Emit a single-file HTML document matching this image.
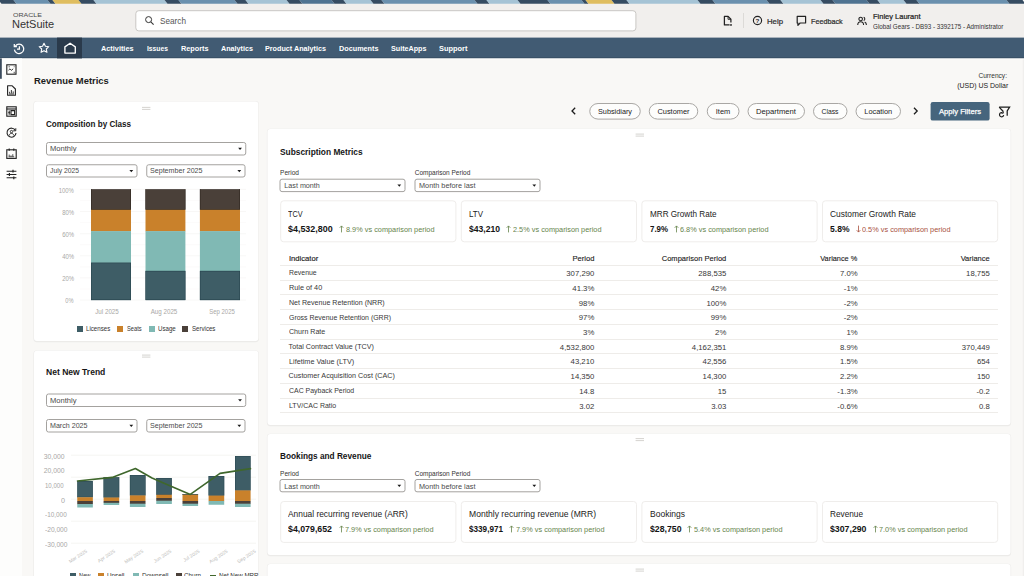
<!DOCTYPE html>
<html lang="en">
<head>
<meta charset="utf-8">
<title>Revenue Metrics</title>
<style>
*{box-sizing:border-box;margin:0;padding:0}
html,body{width:1024px;height:576px;overflow:hidden}
body{position:relative;background:#f9f8f6;font-family:"Liberation Sans",sans-serif;color:#222;font-size:7.5px}
.a{position:absolute}
.t{position:absolute;white-space:nowrap;line-height:1}
svg{display:block;overflow:visible}
</style>
</head>
<body>
<div class="a" style="left:0;top:3px;width:1024px;height:35px;background:#f1efed"></div>
<svg class="a" style="left:0;top:0" width="1024" height="576" viewBox="0 0 1024 576"><rect x="135.80" y="10.70" width="500.10" height="20.20" rx="3" fill="#fff" stroke="#c9c7c4" stroke-width="1"/><rect x="0" y="37.6" width="1024" height="20.8" fill="#415b73"/><rect x="0" y="57.3" width="1024" height="1.1" fill="#374d63"/><rect x="0" y="58.4" width="1024" height="1" fill="#fdfdfd"/><rect x="57" y="37.6" width="25" height="20.8" fill="#2a3a4b"/><rect x="0" y="58.4" width="22" height="518" fill="#fdfdfc"/><rect x="0" y="58.4" width="1.8" height="20.4" fill="#3b4b5d"/><rect x="1022.7" y="59.4" width="1.3" height="517" fill="#f0efed"/><rect x="589.75" y="103.50" width="50.50" height="15.60" rx="8.3" fill="#fdfdfc" stroke="#a9a7a4" stroke-width="1"/><rect x="649.25" y="103.50" width="48.50" height="15.60" rx="8.3" fill="#fdfdfc" stroke="#a9a7a4" stroke-width="1"/><rect x="707.25" y="103.50" width="31.75" height="15.60" rx="8.3" fill="#fdfdfc" stroke="#a9a7a4" stroke-width="1"/><rect x="748.00" y="103.50" width="56.50" height="15.60" rx="8.3" fill="#fdfdfc" stroke="#a9a7a4" stroke-width="1"/><rect x="813.50" y="103.50" width="33.50" height="15.60" rx="8.3" fill="#fdfdfc" stroke="#a9a7a4" stroke-width="1"/><rect x="856.00" y="103.50" width="44.50" height="15.60" rx="8.3" fill="#fdfdfc" stroke="#a9a7a4" stroke-width="1"/><rect x="930.6" y="102" width="59" height="18.6" rx="2.2" fill="#46657d"/><rect x="33.40" y="101.10" width="225.50" height="241.10" rx="3.4" fill="#ecebe9"/><rect x="34.00" y="101.40" width="224.30" height="239.60" rx="3" fill="#fff"/><path d="M142.00 107.40h8.4M142.00 109.40h8.4" stroke="#d0cecb" stroke-width=".9" fill="none"/><rect x="46.50" y="142.50" width="199.25" height="12.50" rx="2" fill="#fff" stroke="#a4a29f" stroke-width="1"/><path d="M238.15 147.85h3.8l-1.9 2.2z" fill="#1a1a1a"/><rect x="46.50" y="164.75" width="90.50" height="12.25" rx="2" fill="#fff" stroke="#a4a29f" stroke-width="1"/><path d="M129.40 169.97h3.8l-1.9 2.2z" fill="#1a1a1a"/><rect x="146.75" y="164.75" width="98.25" height="12.25" rx="2" fill="#fff" stroke="#a4a29f" stroke-width="1"/><path d="M237.40 169.97h3.8l-1.9 2.2z" fill="#1a1a1a"/><rect x="33.40" y="350.50" width="225.50" height="241.50" rx="3.4" fill="#ecebe9"/><rect x="34.00" y="350.80" width="224.30" height="240.00" rx="3" fill="#fff"/><path d="M142.00 355.10h8.4M142.00 357.10h8.4" stroke="#d0cecb" stroke-width=".9" fill="none"/><rect x="46.50" y="394.00" width="199.25" height="12.50" rx="2" fill="#fff" stroke="#a4a29f" stroke-width="1"/><path d="M238.15 399.35h3.8l-1.9 2.2z" fill="#1a1a1a"/><rect x="46.50" y="419.50" width="90.50" height="12.50" rx="2" fill="#fff" stroke="#a4a29f" stroke-width="1"/><path d="M129.40 424.85h3.8l-1.9 2.2z" fill="#1a1a1a"/><rect x="146.75" y="419.50" width="98.25" height="12.50" rx="2" fill="#fff" stroke="#a4a29f" stroke-width="1"/><path d="M237.40 424.85h3.8l-1.9 2.2z" fill="#1a1a1a"/><rect x="266.90" y="128.80" width="744.20" height="297.40" rx="3.4" fill="#ecebe9"/><rect x="267.50" y="129.10" width="743.00" height="295.90" rx="3" fill="#fff"/><path d="M635.60 134.10h8.4M635.60 136.10h8.4" stroke="#d0cecb" stroke-width=".9" fill="none"/><rect x="280.00" y="179.20" width="125.00" height="12.40" rx="2" fill="#fff" stroke="#a4a29f" stroke-width="1"/><path d="M397.40 184.50h3.8l-1.9 2.2z" fill="#1a1a1a"/><rect x="415.00" y="179.20" width="125.00" height="12.40" rx="2" fill="#fff" stroke="#a4a29f" stroke-width="1"/><path d="M532.40 184.50h3.8l-1.9 2.2z" fill="#1a1a1a"/><rect x="280.70" y="200.80" width="175.20" height="41.00" rx="3" fill="#fff" stroke="#efedeb" stroke-width="1"/><rect x="461.30" y="200.80" width="175.20" height="41.00" rx="3" fill="#fff" stroke="#efedeb" stroke-width="1"/><rect x="641.90" y="200.80" width="175.20" height="41.00" rx="3" fill="#fff" stroke="#efedeb" stroke-width="1"/><rect x="822.50" y="200.80" width="175.20" height="41.00" rx="3" fill="#fff" stroke="#efedeb" stroke-width="1"/><rect x="266.90" y="433.70" width="744.20" height="122.50" rx="3.4" fill="#ecebe9"/><rect x="267.50" y="434.00" width="743.00" height="121.00" rx="3" fill="#fff"/><path d="M635.60 438.60h8.4M635.60 440.60h8.4" stroke="#d0cecb" stroke-width=".9" fill="none"/><rect x="280.00" y="479.50" width="125.00" height="12.30" rx="2" fill="#fff" stroke="#a4a29f" stroke-width="1"/><path d="M397.40 484.75h3.8l-1.9 2.2z" fill="#1a1a1a"/><rect x="415.00" y="479.50" width="125.00" height="12.30" rx="2" fill="#fff" stroke="#a4a29f" stroke-width="1"/><path d="M532.40 484.75h3.8l-1.9 2.2z" fill="#1a1a1a"/><rect x="280.70" y="501.50" width="175.20" height="40.90" rx="3" fill="#fff" stroke="#efedeb" stroke-width="1"/><rect x="461.30" y="501.50" width="175.20" height="40.90" rx="3" fill="#fff" stroke="#efedeb" stroke-width="1"/><rect x="641.90" y="501.50" width="175.20" height="40.90" rx="3" fill="#fff" stroke="#efedeb" stroke-width="1"/><rect x="822.50" y="501.50" width="175.20" height="40.90" rx="3" fill="#fff" stroke="#efedeb" stroke-width="1"/><rect x="266.90" y="563.70" width="744.20" height="41.50" rx="3.4" fill="#ecebe9"/><rect x="267.50" y="564.00" width="743.00" height="40.00" rx="3" fill="#fff"/><path d="M635.60 569.10h8.4M635.60 571.10h8.4" stroke="#d0cecb" stroke-width=".9" fill="none"/></svg>
<svg class="a" style="left:0;top:0" width="1024" height="3.8" viewBox="0 0 1024 4" preserveAspectRatio="none"><polygon points="-1.5,0 13.5,0 16.5,4 1.5,4" fill="#364c62"/><polygon points="13.5,0 47.5,0 50.5,4 16.5,4" fill="#6a90ae"/><polygon points="47.5,0 52.5,0 55.5,4 50.5,4" fill="#364c62"/><polygon points="52.5,0 78.5,0 81.5,4 55.5,4" fill="#dfbd5f"/><polygon points="78.5,0 93.5,0 96.5,4 81.5,4" fill="#364c62"/><polygon points="93.5,0 164.5,0 167.5,4 96.5,4" fill="#a5c3d5"/><polygon points="164.5,0 178.5,0 181.5,4 167.5,4" fill="#364c62"/><polygon points="178.5,0 234.5,0 237.5,4 181.5,4" fill="#6a90ae"/><polygon points="234.5,0 245.5,0 248.5,4 237.5,4" fill="#364c62"/><polygon points="245.5,0 286.5,0 289.5,4 248.5,4" fill="#a5c3d5"/><polygon points="286.5,0 299.5,0 302.5,4 289.5,4" fill="#364c62"/><polygon points="299.5,0 331.5,0 334.5,4 302.5,4" fill="#4f7391"/><polygon points="331.5,0 343.5,0 346.5,4 334.5,4" fill="#364c62"/><polygon points="343.5,0 370.5,0 373.5,4 346.5,4" fill="#a5c3d5"/><polygon points="370.5,0 381.5,0 384.5,4 373.5,4" fill="#364c62"/><polygon points="381.5,0 474.5,0 477.5,4 384.5,4" fill="#6a90ae"/><polygon points="474.5,0 486.5,0 489.5,4 477.5,4" fill="#364c62"/><polygon points="486.5,0 517.5,0 520.5,4 489.5,4" fill="#a5c3d5"/><polygon points="517.5,0 547.5,0 550.5,4 520.5,4" fill="#364c62"/><polygon points="547.5,0 581.5,0 584.5,4 550.5,4" fill="#6a90ae"/><polygon points="581.5,0 585.5,0 588.5,4 584.5,4" fill="#364c62"/><polygon points="585.5,0 611.5,0 614.5,4 588.5,4" fill="#dfbd5f"/><polygon points="611.5,0 626.5,0 629.5,4 614.5,4" fill="#364c62"/><polygon points="626.5,0 697.5,0 700.5,4 629.5,4" fill="#a5c3d5"/><polygon points="697.5,0 712.5,0 715.5,4 700.5,4" fill="#364c62"/><polygon points="712.5,0 766.5,0 769.5,4 715.5,4" fill="#6a90ae"/><polygon points="766.5,0 780.5,0 783.5,4 769.5,4" fill="#364c62"/><polygon points="780.5,0 820.5,0 823.5,4 783.5,4" fill="#a5c3d5"/><polygon points="820.5,0 832.5,0 835.5,4 823.5,4" fill="#364c62"/><polygon points="832.5,0 866.5,0 869.5,4 835.5,4" fill="#4f7391"/><polygon points="866.5,0 877.5,0 880.5,4 869.5,4" fill="#364c62"/><polygon points="877.5,0 903.5,0 906.5,4 880.5,4" fill="#a5c3d5"/><polygon points="903.5,0 916.5,0 919.5,4 906.5,4" fill="#364c62"/><polygon points="916.5,0 1006.5,0 1009.5,4 919.5,4" fill="#6a90ae"/><polygon points="1006.5,0 1022.5,0 1025.5,4 1009.5,4" fill="#364c62"/></svg>
<svg class="a" style="left:143.5px;top:15px" width="11" height="11" viewBox="0 0 11 11"><circle cx="4.6" cy="4.6" r="3" fill="none" stroke="#333" stroke-width="1"/><path d="M6.8 6.8L9.6 9.6" stroke="#333" stroke-width="1.1"/></svg>
<svg class="a" style="left:723px;top:15.2px" width="12" height="13" viewBox="0 0 12 13"><path d="M6.6 9.9H1.4V1.4h3.7L7.9 4.2V7.6" fill="none" stroke="#222" stroke-width="1.25" stroke-linejoin="round"/><path d="M5 1.4V4.3H7.9" fill="none" stroke="#222" stroke-width=".9"/><circle cx="8" cy="9.9" r=".95" fill="#222"/></svg>
<div class="a" style="left:743px;top:13px;width:1px;height:15px;background:#dcdad7"></div>
<svg class="a" style="left:752px;top:15px" width="11" height="11" viewBox="0 0 11 11"><circle cx="5.5" cy="5.5" r="4.1" fill="none" stroke="#222" stroke-width="1.15"/><text x="5.5" y="7.7" font-size="6.2" font-weight="bold" text-anchor="middle" fill="#222" font-family="Liberation Sans,sans-serif">?</text></svg>
<svg class="a" style="left:796px;top:15px" width="11" height="12" viewBox="0 0 11 12"><path d="M1.2 1.4h8.4v6.6H4.1L1.9 10.3V8H1.2z" fill="none" stroke="#222" stroke-width="1.2" stroke-linejoin="round"/></svg>
<svg class="a" style="left:857.4px;top:15.6px" width="10" height="10" viewBox="0 0 12 12"><circle cx="4.4" cy="3.5" r="2.1" fill="none" stroke="#222" stroke-width="1.3"/><path d="M.9 10.8c0-2.6 1.4-3.9 3.5-3.9s3.5 1.3 3.5 3.9" fill="none" stroke="#222" stroke-width="1.3"/><path d="M8 1.6a2 2 0 0 1 0 3.8M9.2 7.1c1.4.5 2.1 1.7 2.1 3.7" fill="none" stroke="#222" stroke-width="1.3"/></svg>
<svg class="a" style="left:12.5px;top:42.5px" width="12" height="12" viewBox="0 0 12 12"><path d="M2.4 2.9A4.7 4.7 0 1 1 1.4 6.6" fill="none" stroke="#fff" stroke-width="1.25"/><path d="M1.3 1.1v2.6h2.6" fill="none" stroke="#fff" stroke-width="1.25"/><path d="M6.4 3.2v3H4" fill="none" stroke="#fff" stroke-width="1.25"/></svg>
<svg class="a" style="left:38px;top:42px" width="12" height="12" viewBox="0 0 12 12"><path d="M6 1.2l1.45 3.1 3.35.4-2.5 2.3.65 3.3L6 8.7l-2.95 1.6.65-3.3-2.5-2.3 3.35-.4z" fill="none" stroke="#fff" stroke-width="1.1" stroke-linejoin="round"/></svg>
<svg class="a" style="left:63.5px;top:42px" width="12" height="12" viewBox="0 0 12 12"><path d="M.9 4.9L6.1 1.2l5.2 3.7v6.2H.9z" fill="none" stroke="#fff" stroke-width="1.35" stroke-linejoin="round"/></svg>
<svg class="a" style="left:5.5px;top:63.5px" width="11" height="11" viewBox="0 0 11 11" fill="none" stroke="#222" stroke-width="1.12"><rect x=".8" y=".8" width="9.2" height="9.4"/><path d="M2.5 6.2l1.5-1.4 1.4 1.6 1.8-1.6" stroke-width=".9"/><path d="M2.6 2.8h1.2M8.2 2.4v.8M8.2 7.8v1.6" stroke-width=".8"/></svg>
<svg class="a" style="left:5.5px;top:84.5px" width="11" height="11" viewBox="0 0 11 11" fill="none" stroke="#222" stroke-width="1.12"><path d="M1.6.8h4.6L9.4 4v6.2H1.6z" stroke-linejoin="round"/><path d="M3.6 8.4V6.8M5.4 8.4V5M7.2 8.4V6.4M3 9h5" stroke-width=".9"/></svg>
<svg class="a" style="left:5.5px;top:105.5px" width="11" height="11" viewBox="0 0 11 11" fill="none" stroke="#222" stroke-width="1.12"><rect x=".8" y=".8" width="9.4" height="9.4"/><path d="M.8 3h9.4"/><path d="M3.2 4.6v4.2M5 4.6h3.6v4H5z" stroke-width="1.1"/><path d="M2.2 6.6h2" stroke-width=".8"/></svg>
<svg class="a" style="left:5.5px;top:126.5px" width="11" height="11" viewBox="0 0 11 11" fill="none" stroke="#222" stroke-width="1.12"><path d="M9.4 3.4A4.5 4.5 0 1 0 10 6" /><path d="M9.8 1.2v2.6H7.2" stroke-width=".9"/><circle cx="5.5" cy="4.6" r="1.2" stroke-width=".9"/><path d="M3.3 8.4c.2-1.4 1-2 2.2-2s2 .6 2.2 2" stroke-width=".9"/></svg>
<svg class="a" style="left:5.5px;top:147.5px" width="11" height="11" viewBox="0 0 11 11" fill="none" stroke="#222" stroke-width="1.12"><rect x=".8" y="1.8" width="9.4" height="8.6"/><path d="M3.2.4v2.4M7.8.4v2.4" /><path d="M3.2 8.6V6.6M5 8.6V7.4M6.8 8.6V6.2M2.6 8.8h5.6" stroke-width=".8"/></svg>
<svg class="a" style="left:5.5px;top:168.5px" width="11" height="11" viewBox="0 0 11 11" fill="none" stroke="#222" stroke-width="1.12"><path d="M.6 2.2h9.8M.6 5.5h9.8M.6 8.8h9.8"/><path d="M7 .8v2.8M3.4 4.1v2.8M7.8 7.4v2.8" stroke-width="1.2"/></svg>
<svg class="a" style="left:571.4px;top:107.2px" width="5.2" height="8" viewBox="0 0 5.2 8"><path d="M4.2 .7L1 4l3.2 3.3" fill="none" stroke="#1c1c1c" stroke-width="1.3"/></svg>
<svg class="a" style="left:913.4px;top:107.2px" width="5.2" height="8" viewBox="0 0 5.2 8"><path d="M1 .7L4.2 4 1 7.3" fill="none" stroke="#1c1c1c" stroke-width="1.3"/></svg>
<svg class="a" style="left:997px;top:104.5px" width="14" height="14" viewBox="0 0 14 14" fill="none" stroke="#1c1c1c" stroke-width="1.25"><path d="M2.2 2.1h10.4L10.2 5.9v4.9"/><path d="M2.2 2.1L6.2 6.5"/><path d="M6.7 10.1a2.1 2.1 0 1 1-1.2-2.3" stroke-width="1.2"/><path d="M6.3 6.4v1.8H4.5" stroke-width=".95"/></svg>
<svg class="a" style="left:34px;top:180px" width="224" height="160" viewBox="34 180 224 160"><path d="M80 189.4H246" stroke="#f3f2f0" stroke-width=".6"/><path d="M80 211.5H246" stroke="#f3f2f0" stroke-width=".6"/><path d="M80 233.7H246" stroke="#f3f2f0" stroke-width=".6"/><path d="M80 255.8H246" stroke="#f3f2f0" stroke-width=".6"/><path d="M80 277.9H246" stroke="#f3f2f0" stroke-width=".6"/><path d="M80 300.1H246" stroke="#f3f2f0" stroke-width=".6"/><path d="M80 200.5H246" stroke="#f8f7f6" stroke-width=".5"/><path d="M80 222.6H246" stroke="#f8f7f6" stroke-width=".5"/><path d="M80 244.7H246" stroke="#f8f7f6" stroke-width=".5"/><path d="M80 266.9H246" stroke="#f8f7f6" stroke-width=".5"/><path d="M80 289.0H246" stroke="#f8f7f6" stroke-width=".5"/><rect x="91" y="189.4" width="40.0" height="20.6" fill="#4a4039"/><rect x="91.25" y="189.65" width="39.5" height="19.9" fill="none" stroke="#2b231d" stroke-width=".5"/><rect x="91" y="209.8" width="40.0" height="21.5" fill="#c9812b"/><rect x="91" y="231.1" width="40.0" height="31.8" fill="#80b9b4"/><rect x="91" y="262.7" width="40.0" height="37.5" fill="#3e5d66"/><rect x="91.25" y="262.95" width="39.5" height="36.8" fill="none" stroke="#24434b" stroke-width=".5"/><rect x="145.5" y="189.4" width="39.9" height="20.6" fill="#4a4039"/><rect x="145.75" y="189.65" width="39.4" height="19.9" fill="none" stroke="#2b231d" stroke-width=".5"/><rect x="145.5" y="209.8" width="39.9" height="21.5" fill="#c9812b"/><rect x="145.5" y="231.1" width="39.9" height="40.0" fill="#80b9b4"/><rect x="145.5" y="270.9" width="39.9" height="29.3" fill="#3e5d66"/><rect x="145.75" y="271.15" width="39.4" height="28.6" fill="none" stroke="#24434b" stroke-width=".5"/><rect x="199.9" y="189.4" width="40.1" height="20.6" fill="#4a4039"/><rect x="200.15" y="189.65" width="39.6" height="19.9" fill="none" stroke="#2b231d" stroke-width=".5"/><rect x="199.9" y="209.8" width="40.1" height="21.5" fill="#c9812b"/><rect x="199.9" y="231.1" width="40.1" height="40.0" fill="#80b9b4"/><rect x="199.9" y="270.9" width="40.1" height="29.3" fill="#3e5d66"/><rect x="200.15" y="271.15" width="39.6" height="28.6" fill="none" stroke="#24434b" stroke-width=".5"/></svg>
<div class="a" style="left:77px;top:325.8px;width:6px;height:6px;background:#3e5d66"></div>
<div class="a" style="left:117.4px;top:325.8px;width:6px;height:6px;background:#c9812b"></div>
<div class="a" style="left:148.7px;top:325.8px;width:6px;height:6px;background:#80b9b4"></div>
<div class="a" style="left:182.4px;top:325.8px;width:6px;height:6px;background:#4a4039"></div>
<svg class="a" style="left:34px;top:440px" width="224" height="136" viewBox="34 440 224 136"><path d="M71 455.2H256" stroke="#f1f0ee" stroke-width=".7"/><path d="M71 477.2H256" stroke="#f1f0ee" stroke-width=".7"/><path d="M71 499.2H256" stroke="#f1f0ee" stroke-width=".7"/><path d="M71 521.2H256" stroke="#f1f0ee" stroke-width=".7"/><path d="M71 543.2H256" stroke="#f1f0ee" stroke-width=".7"/><rect x="77.25" y="481" width="15.6" height="16.45" fill="#3e5d66"/><rect x="77.45" y="481.2" width="15.2" height="15.85" fill="none" stroke="#24434b" stroke-width=".4"/><rect x="77.25" y="497.25" width="15.6" height="3.95" fill="#c9812b"/><rect x="77.25" y="501" width="15.6" height="3.20" fill="#4a4039"/><rect x="77.25" y="504" width="15.6" height="3.50" fill="#80b9b4"/><rect x="103.6" y="477.2" width="15.6" height="20.50" fill="#3e5d66"/><rect x="103.8" y="477.4" width="15.2" height="19.90" fill="none" stroke="#24434b" stroke-width=".4"/><rect x="103.6" y="497.5" width="15.6" height="3.70" fill="#c9812b"/><rect x="103.6" y="501" width="15.6" height="2.00" fill="#4a4039"/><rect x="103.6" y="502.8" width="15.6" height="2.20" fill="#80b9b4"/><rect x="129.9" y="475" width="15.6" height="20.60" fill="#3e5d66"/><rect x="130.1" y="475.2" width="15.2" height="20.00" fill="none" stroke="#24434b" stroke-width=".4"/><rect x="129.9" y="495.4" width="15.6" height="5.80" fill="#c9812b"/><rect x="129.9" y="501" width="15.6" height="2.95" fill="#4a4039"/><rect x="129.9" y="503.75" width="15.6" height="3.25" fill="#80b9b4"/><rect x="156.25" y="478" width="15.6" height="16.95" fill="#3e5d66"/><rect x="156.45" y="478.2" width="15.2" height="16.35" fill="none" stroke="#24434b" stroke-width=".4"/><rect x="156.25" y="494.75" width="15.6" height="3.45" fill="#c9812b"/><rect x="156.25" y="498" width="15.6" height="2.95" fill="#4a4039"/><rect x="156.25" y="500.75" width="15.6" height="3.25" fill="#80b9b4"/><rect x="182.5" y="494" width="15.6" height="0.95" fill="#3e5d66"/><rect x="182.7" y="494.2" width="15.2" height="0.35" fill="none" stroke="#24434b" stroke-width=".4"/><rect x="182.5" y="494.75" width="15.6" height="6.45" fill="#c9812b"/><rect x="182.5" y="501" width="15.6" height="2.95" fill="#4a4039"/><rect x="182.5" y="503.75" width="15.6" height="2.25" fill="#80b9b4"/><rect x="208.6" y="476" width="15.6" height="19.80" fill="#3e5d66"/><rect x="208.79999999999998" y="476.2" width="15.2" height="19.20" fill="none" stroke="#24434b" stroke-width=".4"/><rect x="208.6" y="495.6" width="15.6" height="5.60" fill="#c9812b"/><rect x="208.6" y="501" width="15.6" height="3.75" fill="#80b9b4"/><rect x="235" y="456" width="15.6" height="34.60" fill="#3e5d66"/><rect x="235.2" y="456.2" width="15.2" height="34.00" fill="none" stroke="#24434b" stroke-width=".4"/><rect x="235" y="490.4" width="15.6" height="10.80" fill="#c9812b"/><rect x="235" y="501" width="15.6" height="2.95" fill="#4a4039"/><rect x="235" y="503.75" width="15.6" height="3.25" fill="#80b9b4"/><polyline points="77.5,481 112.2,477.4 135.4,468.5 152,478 164,483.2 190.3,494.4 220,473.4 250.5,468.6" fill="none" stroke="#3f672c" stroke-width="1.6" stroke-linejoin="round" stroke-linecap="round"/><text x="87.5" y="552" transform="rotate(-33 87.5 552)" text-anchor="end" font-size="4.9" fill="#bcbbb9" font-family="Liberation Sans,sans-serif">Mar 2025</text><text x="115.6" y="552" transform="rotate(-33 115.6 552)" text-anchor="end" font-size="4.9" fill="#bcbbb9" font-family="Liberation Sans,sans-serif">Apr 2025</text><text x="143.7" y="552" transform="rotate(-33 143.7 552)" text-anchor="end" font-size="4.9" fill="#bcbbb9" font-family="Liberation Sans,sans-serif">May 2025</text><text x="171.8" y="552" transform="rotate(-33 171.8 552)" text-anchor="end" font-size="4.9" fill="#bcbbb9" font-family="Liberation Sans,sans-serif">Jun 2025</text><text x="200" y="552" transform="rotate(-33 200 552)" text-anchor="end" font-size="4.9" fill="#bcbbb9" font-family="Liberation Sans,sans-serif">Jul 2025</text><text x="228.1" y="552" transform="rotate(-33 228.1 552)" text-anchor="end" font-size="4.9" fill="#bcbbb9" font-family="Liberation Sans,sans-serif">Aug 2025</text><text x="256.2" y="552" transform="rotate(-33 256.2 552)" text-anchor="end" font-size="4.9" fill="#bcbbb9" font-family="Liberation Sans,sans-serif">Sep 2025</text></svg>
<div class="a" style="left:69.75px;top:573px;width:6px;height:6px;background:#3e5d66"></div>
<div class="a" style="left:98px;top:573px;width:6px;height:6px;background:#c9812b"></div>
<div class="a" style="left:133px;top:573px;width:6px;height:6px;background:#80b9b4"></div>
<div class="a" style="left:175.5px;top:573px;width:6px;height:6px;background:#4a4039"></div>
<div class="a" style="left:209.5px;top:575.4px;width:6.5px;height:1.4px;background:#41682c"></div>
<svg class="a" style="left:339.3px;top:225.1px" width="5" height="8" viewBox="0 0 5 8"><path d="M2.5 7.4V1M.7 2.8L2.5.9l1.8 1.9" fill="none" stroke="#66844b" stroke-width=".8"/></svg>
<svg class="a" style="left:506.3px;top:225.1px" width="5" height="8" viewBox="0 0 5 8"><path d="M2.5 7.4V1M.7 2.8L2.5.9l1.8 1.9" fill="none" stroke="#66844b" stroke-width=".8"/></svg>
<svg class="a" style="left:673.9px;top:225.1px" width="5" height="8" viewBox="0 0 5 8"><path d="M2.5 7.4V1M.7 2.8L2.5.9l1.8 1.9" fill="none" stroke="#66844b" stroke-width=".8"/></svg>
<svg class="a" style="left:855.9999999999999px;top:225.1px" width="5" height="8" viewBox="0 0 5 8"><path d="M2.5 .6v6.4M.7 5.2l1.8 1.9 1.8-1.9" fill="none" stroke="#a8503d" stroke-width=".8"/></svg>
<div class="a" style="left:280px;top:264.90px;width:718px;height:1px;background:#eeece9"></div>
<div class="a" style="left:280px;top:279.64px;width:718px;height:1px;background:#eeece9"></div>
<div class="a" style="left:280px;top:294.38px;width:718px;height:1px;background:#eeece9"></div>
<div class="a" style="left:280px;top:309.12px;width:718px;height:1px;background:#eeece9"></div>
<div class="a" style="left:280px;top:323.86px;width:718px;height:1px;background:#eeece9"></div>
<div class="a" style="left:280px;top:338.60px;width:718px;height:1px;background:#eeece9"></div>
<div class="a" style="left:280px;top:353.34px;width:718px;height:1px;background:#eeece9"></div>
<div class="a" style="left:280px;top:368.08px;width:718px;height:1px;background:#eeece9"></div>
<div class="a" style="left:280px;top:382.82px;width:718px;height:1px;background:#eeece9"></div>
<div class="a" style="left:280px;top:397.56px;width:718px;height:1px;background:#eeece9"></div>
<div class="a" style="left:280px;top:412.30px;width:718px;height:1px;background:#eeece9"></div>
<svg class="a" style="left:338.7px;top:525.4px" width="5" height="8" viewBox="0 0 5 8"><path d="M2.5 7.4V1M.7 2.8L2.5.9l1.8 1.9" fill="none" stroke="#66844b" stroke-width=".8"/></svg>
<svg class="a" style="left:509.3px;top:525.4px" width="5" height="8" viewBox="0 0 5 8"><path d="M2.5 7.4V1M.7 2.8L2.5.9l1.8 1.9" fill="none" stroke="#66844b" stroke-width=".8"/></svg>
<svg class="a" style="left:687.4px;top:525.4px" width="5" height="8" viewBox="0 0 5 8"><path d="M2.5 7.4V1M.7 2.8L2.5.9l1.8 1.9" fill="none" stroke="#66844b" stroke-width=".8"/></svg>
<svg class="a" style="left:872.9999999999999px;top:525.4px" width="5" height="8" viewBox="0 0 5 8"><path d="M2.5 7.4V1M.7 2.8L2.5.9l1.8 1.9" fill="none" stroke="#66844b" stroke-width=".8"/></svg>
<div class="t" style="font-size:4.7px;color:#4a4a4a;top:14.28px;left:12.5px;transform:scaleX(1.494);transform-origin:0 50%;">ORACLE</div>
<div class="t" style="font-size:11.2px;color:#333;top:18.76px;left:12.0px;transform:scaleX(0.983);transform-origin:0 50%;">NetSuite</div>
<div class="t" style="font-size:8.4px;color:#555;top:16.82px;left:160.3px;transform:scaleX(0.979);transform-origin:0 50%;">Search</div>
<div class="t" style="font-size:7.6px;color:#2e2e2e;top:17.98px;left:767px;transform:scaleX(1.024);transform-origin:0 50%;-webkit-text-stroke:0.22px #2e2e2e;">Help</div>
<div class="t" style="font-size:7.6px;color:#2e2e2e;top:17.98px;left:811.4px;transform:scaleX(0.947);transform-origin:0 50%;-webkit-text-stroke:0.22px #2e2e2e;">Feedback</div>
<div class="t" style="font-size:7.6px;color:#222;top:12.78px;left:872.5px;transform:scaleX(0.987);transform-origin:0 50%;-webkit-text-stroke:0.22px #222;">Finley Laurant</div>
<div class="t" style="font-size:6.6px;color:#333;top:23.63px;left:872.5px;transform:scaleX(0.951);transform-origin:0 50%;">Global Gears - DB93 - 3392175 - Administrator</div>
<div class="t" style="font-size:7.6px;color:#fff;top:44.98px;font-weight:bold;left:101px;transform:scaleX(0.963);transform-origin:0 50%;">Activities</div>
<div class="t" style="font-size:7.6px;color:#fff;top:44.98px;font-weight:bold;left:146.5px;transform:scaleX(0.888);transform-origin:0 50%;">Issues</div>
<div class="t" style="font-size:7.6px;color:#fff;top:44.98px;font-weight:bold;left:180.5px;transform:scaleX(0.958);transform-origin:0 50%;">Reports</div>
<div class="t" style="font-size:7.6px;color:#fff;top:44.98px;font-weight:bold;left:220.5px;transform:scaleX(0.948);transform-origin:0 50%;">Analytics</div>
<div class="t" style="font-size:7.6px;color:#fff;top:44.98px;font-weight:bold;left:265px;transform:scaleX(0.949);transform-origin:0 50%;">Product Analytics</div>
<div class="t" style="font-size:7.6px;color:#fff;top:44.98px;font-weight:bold;left:339px;transform:scaleX(0.955);transform-origin:0 50%;">Documents</div>
<div class="t" style="font-size:7.6px;color:#fff;top:44.98px;font-weight:bold;left:391px;transform:scaleX(0.945);transform-origin:0 50%;">SuiteApps</div>
<div class="t" style="font-size:7.6px;color:#fff;top:44.98px;font-weight:bold;left:439px;transform:scaleX(0.979);transform-origin:0 50%;">Support</div>
<div class="t" style="font-size:9.6px;color:#1c1c1c;top:76.28px;font-weight:bold;left:34px;transform:scaleX(0.981);transform-origin:0 50%;">Revenue Metrics</div>
<div class="t" style="font-size:6.6px;color:#333;top:72.63px;right:17.00px;">Currency:</div>
<div class="t" style="font-size:7.4px;color:#222;top:81.87px;right:15.50px;transform:scaleX(0.941);transform-origin:100% 50%;">(USD) US Dollar</div>
<div class="t" style="font-size:7.4px;color:#222;top:107.97px;left:615.00px;transform:translateX(-50%) scaleX(0.985);">Subsidiary</div>
<div class="t" style="font-size:7.4px;color:#222;top:107.97px;left:673.50px;transform:translateX(-50%) ;">Customer</div>
<div class="t" style="font-size:7.4px;color:#222;top:107.97px;left:723.12px;transform:translateX(-50%) scaleX(1.009);">Item</div>
<div class="t" style="font-size:7.4px;color:#222;top:107.97px;left:776.25px;transform:translateX(-50%) scaleX(1.036);">Department</div>
<div class="t" style="font-size:7.4px;color:#222;top:107.97px;left:830.25px;transform:translateX(-50%) scaleX(0.920);">Class</div>
<div class="t" style="font-size:7.4px;color:#222;top:107.97px;left:878.25px;transform:translateX(-50%) ;">Location</div>
<div class="t" style="font-size:7.6px;color:#fff;top:107.88px;left:939px;transform:scaleX(1.005);transform-origin:0 50%;-webkit-text-stroke:0.25px #fff;">Apply Filters</div>
<div class="t" style="font-size:9px;color:#161616;top:119.95px;font-weight:bold;left:46.25px;transform:scaleX(0.899);transform-origin:0 50%;">Composition by Class</div>
<div class="t" style="font-size:7.4px;color:#4a4a4a;top:145.37px;left:50.0px;transform:scaleX(1.024);transform-origin:0 50%;">Monthly</div>
<div class="t" style="font-size:7.4px;color:#4a4a4a;top:167.49px;left:50.0px;transform:scaleX(0.917);transform-origin:0 50%;">July 2025</div>
<div class="t" style="font-size:7.4px;color:#4a4a4a;top:167.49px;left:150.25px;transform:scaleX(0.961);transform-origin:0 50%;">September 2025</div>
<div class="t" style="font-size:6.6px;color:#a9a8a6;top:187.83px;right:950.10px;transform:scaleX(0.901);transform-origin:100% 50%;">100%</div>
<div class="t" style="font-size:6.6px;color:#a9a8a6;top:209.96px;right:950.10px;transform:scaleX(0.909);transform-origin:100% 50%;">80%</div>
<div class="t" style="font-size:6.6px;color:#a9a8a6;top:232.09px;right:950.10px;transform:scaleX(0.909);transform-origin:100% 50%;">60%</div>
<div class="t" style="font-size:6.6px;color:#a9a8a6;top:254.22px;right:950.10px;transform:scaleX(0.909);transform-origin:100% 50%;">40%</div>
<div class="t" style="font-size:6.6px;color:#a9a8a6;top:276.35px;right:950.10px;transform:scaleX(0.909);transform-origin:100% 50%;">20%</div>
<div class="t" style="font-size:6.6px;color:#a9a8a6;top:298.48px;right:950.10px;transform:scaleX(0.860);transform-origin:100% 50%;">0%</div>
<div class="t" style="font-size:6.6px;color:#a9a8a6;top:308.93px;left:106.50px;transform:translateX(-50%) scaleX(0.946);">Jul 2025</div>
<div class="t" style="font-size:6.6px;color:#a9a8a6;top:308.93px;left:164.10px;transform:translateX(-50%) scaleX(0.942);">Aug 2025</div>
<div class="t" style="font-size:6.6px;color:#a9a8a6;top:308.93px;left:221.80px;transform:translateX(-50%) scaleX(0.907);">Sep 2025</div>
<div class="t" style="font-size:6.8px;color:#333;top:325.64px;left:86.1px;transform:scaleX(0.906);transform-origin:0 50%;">Licenses</div>
<div class="t" style="font-size:6.8px;color:#333;top:325.64px;left:126.5px;transform:scaleX(0.845);transform-origin:0 50%;">Seats</div>
<div class="t" style="font-size:6.8px;color:#333;top:325.64px;left:157.79999999999998px;transform:scaleX(0.900);transform-origin:0 50%;">Usage</div>
<div class="t" style="font-size:6.8px;color:#333;top:325.64px;left:191.5px;transform:scaleX(0.898);transform-origin:0 50%;">Services</div>
<div class="t" style="font-size:9px;color:#161616;top:367.95px;font-weight:bold;left:46.25px;transform:scaleX(0.949);transform-origin:0 50%;">Net New Trend</div>
<div class="t" style="font-size:7.4px;color:#4a4a4a;top:396.87px;left:50.0px;transform:scaleX(1.024);transform-origin:0 50%;">Monthly</div>
<div class="t" style="font-size:7.4px;color:#4a4a4a;top:422.37px;left:50.0px;transform:scaleX(0.961);transform-origin:0 50%;">March 2025</div>
<div class="t" style="font-size:7.4px;color:#4a4a4a;top:422.37px;left:150.25px;transform:scaleX(0.961);transform-origin:0 50%;">September 2025</div>
<div class="t" style="font-size:6.8px;color:#a9a8a6;top:453.84px;left:43.75px;">30,000</div>
<div class="t" style="font-size:6.8px;color:#a9a8a6;top:468.49px;left:43.75px;">20,000</div>
<div class="t" style="font-size:6.8px;color:#a9a8a6;top:483.14px;left:44.5px;transform:scaleX(0.890);transform-origin:0 50%;">10,000</div>
<div class="t" style="font-size:6.8px;color:#a9a8a6;top:497.79px;left:61px;transform:scaleX(1.058);transform-origin:0 50%;">0</div>
<div class="t" style="font-size:6.8px;color:#a9a8a6;top:512.44px;left:45px;transform:scaleX(0.941);transform-origin:0 50%;">-10,000</div>
<div class="t" style="font-size:6.8px;color:#a9a8a6;top:527.09px;left:44.5px;transform:scaleX(0.976);transform-origin:0 50%;">-20,000</div>
<div class="t" style="font-size:6.8px;color:#a9a8a6;top:541.74px;left:44.5px;transform:scaleX(0.976);transform-origin:0 50%;">-30,000</div>
<div class="t" style="font-size:6.8px;color:#333;top:572.84px;left:78.65px;transform:scaleX(0.845);transform-origin:0 50%;">New</div>
<div class="t" style="font-size:6.8px;color:#333;top:572.84px;left:106.9px;transform:scaleX(0.926);transform-origin:0 50%;">Upsell</div>
<div class="t" style="font-size:6.8px;color:#333;top:572.84px;left:141.9px;transform:scaleX(0.961);transform-origin:0 50%;">Downsell</div>
<div class="t" style="font-size:6.8px;color:#333;top:572.84px;left:184.4px;transform:scaleX(0.918);transform-origin:0 50%;">Churn</div>
<div class="t" style="font-size:6.8px;color:#333;top:572.84px;left:218.5px;transform:scaleX(0.909);transform-origin:0 50%;">Net New MRR</div>
<div class="t" style="font-size:8.8px;color:#161616;top:147.64px;font-weight:bold;left:279.7px;transform:scaleX(0.950);transform-origin:0 50%;">Subscription Metrics</div>
<div class="t" style="font-size:6.5px;color:#333;top:170.27px;left:279.7px;transform:scaleX(1.011);transform-origin:0 50%;">Period</div>
<div class="t" style="font-size:6.5px;color:#333;top:170.27px;left:414.7px;">Comparison Period</div>
<div class="t" style="font-size:7.2px;color:#4a4a4a;top:182.46px;left:284.3px;">Last month</div>
<div class="t" style="font-size:7.2px;color:#4a4a4a;top:182.46px;left:419.3px;transform:scaleX(1.017);transform-origin:0 50%;">Month before last</div>
<div class="t" style="font-size:8.6px;color:#222;top:210.13px;left:288.4px;transform:scaleX(0.849);transform-origin:0 50%;">TCV</div>
<div class="t" style="font-size:9px;color:#141414;top:224.75px;font-weight:bold;left:288.4px;transform:scaleX(0.990);transform-origin:0 50%;">$4,532,800</div>
<div class="t" style="font-size:7.4px;color:#66844b;top:225.57px;left:345.6px;transform:scaleX(0.993);transform-origin:0 50%;">8.9% vs comparison period</div>
<div class="t" style="font-size:8.6px;color:#222;top:210.13px;left:469.0px;transform:scaleX(0.926);transform-origin:0 50%;">LTV</div>
<div class="t" style="font-size:9px;color:#141414;top:224.75px;font-weight:bold;left:469.0px;transform:scaleX(0.952);transform-origin:0 50%;">$43,210</div>
<div class="t" style="font-size:7.4px;color:#66844b;top:225.57px;left:512.6px;transform:scaleX(0.993);transform-origin:0 50%;">2.5% vs comparison period</div>
<div class="t" style="font-size:8.6px;color:#222;top:210.13px;left:649.6px;transform:scaleX(0.947);transform-origin:0 50%;">MRR Growth Rate</div>
<div class="t" style="font-size:9px;color:#141414;top:224.75px;font-weight:bold;left:649.6px;transform:scaleX(0.877);transform-origin:0 50%;">7.9%</div>
<div class="t" style="font-size:7.4px;color:#66844b;top:225.57px;left:680.1999999999999px;transform:scaleX(0.993);transform-origin:0 50%;">6.8% vs comparison period</div>
<div class="t" style="font-size:8.6px;color:#222;top:210.13px;left:830.1999999999999px;transform:scaleX(0.978);transform-origin:0 50%;">Customer Growth Rate</div>
<div class="t" style="font-size:9px;color:#141414;top:224.75px;font-weight:bold;left:830.1999999999999px;transform:scaleX(0.950);transform-origin:0 50%;">5.8%</div>
<div class="t" style="font-size:7.4px;color:#a8503d;top:225.57px;left:862.2999999999998px;transform:scaleX(0.993);transform-origin:0 50%;">0.5% vs comparison period</div>
<div class="t" style="font-size:7.2px;color:#222;top:254.96px;left:288.6px;transform:scaleX(1.062);transform-origin:0 50%;-webkit-text-stroke:0.15px #222;">Indicator</div>
<div class="t" style="font-size:7.4px;color:#222;top:254.87px;right:429.70px;transform:scaleX(1.029);transform-origin:100% 50%;-webkit-text-stroke:0.12px #222;">Period</div>
<div class="t" style="font-size:7.4px;color:#222;top:254.87px;right:297.70px;transform:scaleX(1.020);transform-origin:100% 50%;-webkit-text-stroke:0.12px #222;">Comparison Period</div>
<div class="t" style="font-size:7.4px;color:#222;top:254.87px;right:166.40px;transform:scaleX(0.993);transform-origin:100% 50%;-webkit-text-stroke:0.12px #222;">Variance %</div>
<div class="t" style="font-size:7.4px;color:#222;top:254.87px;right:34.20px;transform:scaleX(1.013);transform-origin:100% 50%;-webkit-text-stroke:0.12px #222;">Variance</div>
<div class="t" style="font-size:7.2px;color:#383838;top:269.30px;left:288.6px;transform:scaleX(0.962);transform-origin:0 50%;">Revenue</div>
<div class="t" style="font-size:7.75px;color:#383838;top:270.05px;right:429.70px;">307,290</div>
<div class="t" style="font-size:7.75px;color:#383838;top:270.05px;right:297.70px;">288,535</div>
<div class="t" style="font-size:7.75px;color:#383838;top:270.05px;right:166.40px;">7.0%</div>
<div class="t" style="font-size:7.75px;color:#383838;top:270.05px;right:34.20px;">18,755</div>
<div class="t" style="font-size:7.2px;color:#383838;top:284.04px;left:288.6px;transform:scaleX(1.013);transform-origin:0 50%;">Rule of 40</div>
<div class="t" style="font-size:7.75px;color:#383838;top:284.79px;right:429.70px;">41.3%</div>
<div class="t" style="font-size:7.75px;color:#383838;top:284.79px;right:297.70px;">42%</div>
<div class="t" style="font-size:7.75px;color:#383838;top:284.79px;right:166.40px;">-1%</div>
<div class="t" style="font-size:7.2px;color:#383838;top:298.78px;left:288.6px;transform:scaleX(0.986);transform-origin:0 50%;">Net Revenue Retention (NRR)</div>
<div class="t" style="font-size:7.75px;color:#383838;top:299.53px;right:429.70px;">98%</div>
<div class="t" style="font-size:7.75px;color:#383838;top:299.53px;right:297.70px;">100%</div>
<div class="t" style="font-size:7.75px;color:#383838;top:299.53px;right:166.40px;">-2%</div>
<div class="t" style="font-size:7.2px;color:#383838;top:313.52px;left:288.6px;transform:scaleX(0.967);transform-origin:0 50%;">Gross Revenue Retention (GRR)</div>
<div class="t" style="font-size:7.75px;color:#383838;top:314.27px;right:429.70px;">97%</div>
<div class="t" style="font-size:7.75px;color:#383838;top:314.27px;right:297.70px;">99%</div>
<div class="t" style="font-size:7.75px;color:#383838;top:314.27px;right:166.40px;">-2%</div>
<div class="t" style="font-size:7.2px;color:#383838;top:328.26px;left:288.6px;transform:scaleX(0.987);transform-origin:0 50%;">Churn Rate</div>
<div class="t" style="font-size:7.75px;color:#383838;top:329.01px;right:429.70px;">3%</div>
<div class="t" style="font-size:7.75px;color:#383838;top:329.01px;right:297.70px;">2%</div>
<div class="t" style="font-size:7.75px;color:#383838;top:329.01px;right:166.40px;">1%</div>
<div class="t" style="font-size:7.2px;color:#383838;top:343.00px;left:288.6px;">Total Contract Value (TCV)</div>
<div class="t" style="font-size:7.75px;color:#383838;top:343.75px;right:429.70px;">4,532,800</div>
<div class="t" style="font-size:7.75px;color:#383838;top:343.75px;right:297.70px;">4,162,351</div>
<div class="t" style="font-size:7.75px;color:#383838;top:343.75px;right:166.40px;">8.9%</div>
<div class="t" style="font-size:7.75px;color:#383838;top:343.75px;right:34.20px;">370,449</div>
<div class="t" style="font-size:7.2px;color:#383838;top:357.74px;left:288.6px;transform:scaleX(1.012);transform-origin:0 50%;">Lifetime Value (LTV)</div>
<div class="t" style="font-size:7.75px;color:#383838;top:358.49px;right:429.70px;">43,210</div>
<div class="t" style="font-size:7.75px;color:#383838;top:358.49px;right:297.70px;">42,556</div>
<div class="t" style="font-size:7.75px;color:#383838;top:358.49px;right:166.40px;">1.5%</div>
<div class="t" style="font-size:7.75px;color:#383838;top:358.49px;right:34.20px;">654</div>
<div class="t" style="font-size:7.2px;color:#383838;top:372.48px;left:288.6px;">Customer Acquisition Cost (CAC)</div>
<div class="t" style="font-size:7.75px;color:#383838;top:373.23px;right:429.70px;">14,350</div>
<div class="t" style="font-size:7.75px;color:#383838;top:373.23px;right:297.70px;">14,300</div>
<div class="t" style="font-size:7.75px;color:#383838;top:373.23px;right:166.40px;">2.2%</div>
<div class="t" style="font-size:7.75px;color:#383838;top:373.23px;right:34.20px;">150</div>
<div class="t" style="font-size:7.2px;color:#383838;top:387.22px;left:288.6px;transform:scaleX(0.966);transform-origin:0 50%;">CAC Payback Period</div>
<div class="t" style="font-size:7.75px;color:#383838;top:387.97px;right:429.70px;">14.8</div>
<div class="t" style="font-size:7.75px;color:#383838;top:387.97px;right:297.70px;">15</div>
<div class="t" style="font-size:7.75px;color:#383838;top:387.97px;right:166.40px;">-1.3%</div>
<div class="t" style="font-size:7.75px;color:#383838;top:387.97px;right:34.20px;">-0.2</div>
<div class="t" style="font-size:7.2px;color:#383838;top:401.96px;left:288.6px;transform:scaleX(0.971);transform-origin:0 50%;">LTV/CAC Ratio</div>
<div class="t" style="font-size:7.75px;color:#383838;top:402.71px;right:429.70px;">3.02</div>
<div class="t" style="font-size:7.75px;color:#383838;top:402.71px;right:297.70px;">3.03</div>
<div class="t" style="font-size:7.75px;color:#383838;top:402.71px;right:166.40px;">-0.6%</div>
<div class="t" style="font-size:7.75px;color:#383838;top:402.71px;right:34.20px;">0.8</div>
<div class="t" style="font-size:8.8px;color:#161616;top:451.94px;font-weight:bold;left:279.7px;transform:scaleX(0.939);transform-origin:0 50%;">Bookings and Revenue</div>
<div class="t" style="font-size:6.5px;color:#333;top:470.68px;left:279.7px;transform:scaleX(1.011);transform-origin:0 50%;">Period</div>
<div class="t" style="font-size:6.5px;color:#333;top:470.68px;left:414.7px;">Comparison Period</div>
<div class="t" style="font-size:7.2px;color:#4a4a4a;top:482.71px;left:284.3px;">Last month</div>
<div class="t" style="font-size:7.2px;color:#4a4a4a;top:482.71px;left:419.3px;transform:scaleX(1.017);transform-origin:0 50%;">Month before last</div>
<div class="t" style="font-size:8.6px;color:#222;top:510.43px;left:288.4px;transform:scaleX(0.975);transform-origin:0 50%;">Annual recurring revenue (ARR)</div>
<div class="t" style="font-size:9px;color:#141414;top:525.05px;font-weight:bold;left:288.4px;transform:scaleX(0.977);transform-origin:0 50%;">$4,079,652</div>
<div class="t" style="font-size:7.4px;color:#66844b;top:525.87px;left:345.0px;transform:scaleX(0.993);transform-origin:0 50%;">7.9% vs comparison period</div>
<div class="t" style="font-size:8.6px;color:#222;top:510.43px;left:469.0px;transform:scaleX(0.996);transform-origin:0 50%;">Monthly recurring revenue (MRR)</div>
<div class="t" style="font-size:9px;color:#141414;top:525.05px;font-weight:bold;left:469.0px;transform:scaleX(0.906);transform-origin:0 50%;">$339,971</div>
<div class="t" style="font-size:7.4px;color:#66844b;top:525.87px;left:515.6px;transform:scaleX(0.993);transform-origin:0 50%;">7.9% vs comparison period</div>
<div class="t" style="font-size:8.6px;color:#222;top:510.43px;left:649.6px;transform:scaleX(0.990);transform-origin:0 50%;">Bookings</div>
<div class="t" style="font-size:9px;color:#141414;top:525.05px;font-weight:bold;left:649.6px;transform:scaleX(0.968);transform-origin:0 50%;">$28,750</div>
<div class="t" style="font-size:7.4px;color:#66844b;top:525.87px;left:693.6999999999999px;transform:scaleX(0.993);transform-origin:0 50%;">5.4% vs comparison period</div>
<div class="t" style="font-size:8.6px;color:#222;top:510.43px;left:830.1999999999999px;transform:scaleX(0.959);transform-origin:0 50%;">Revenue</div>
<div class="t" style="font-size:9px;color:#141414;top:525.05px;font-weight:bold;left:830.1999999999999px;transform:scaleX(0.972);transform-origin:0 50%;">$307,290</div>
<div class="t" style="font-size:7.4px;color:#66844b;top:525.87px;left:879.2999999999998px;transform:scaleX(0.993);transform-origin:0 50%;">7.0% vs comparison period</div>
</body>
</html>
